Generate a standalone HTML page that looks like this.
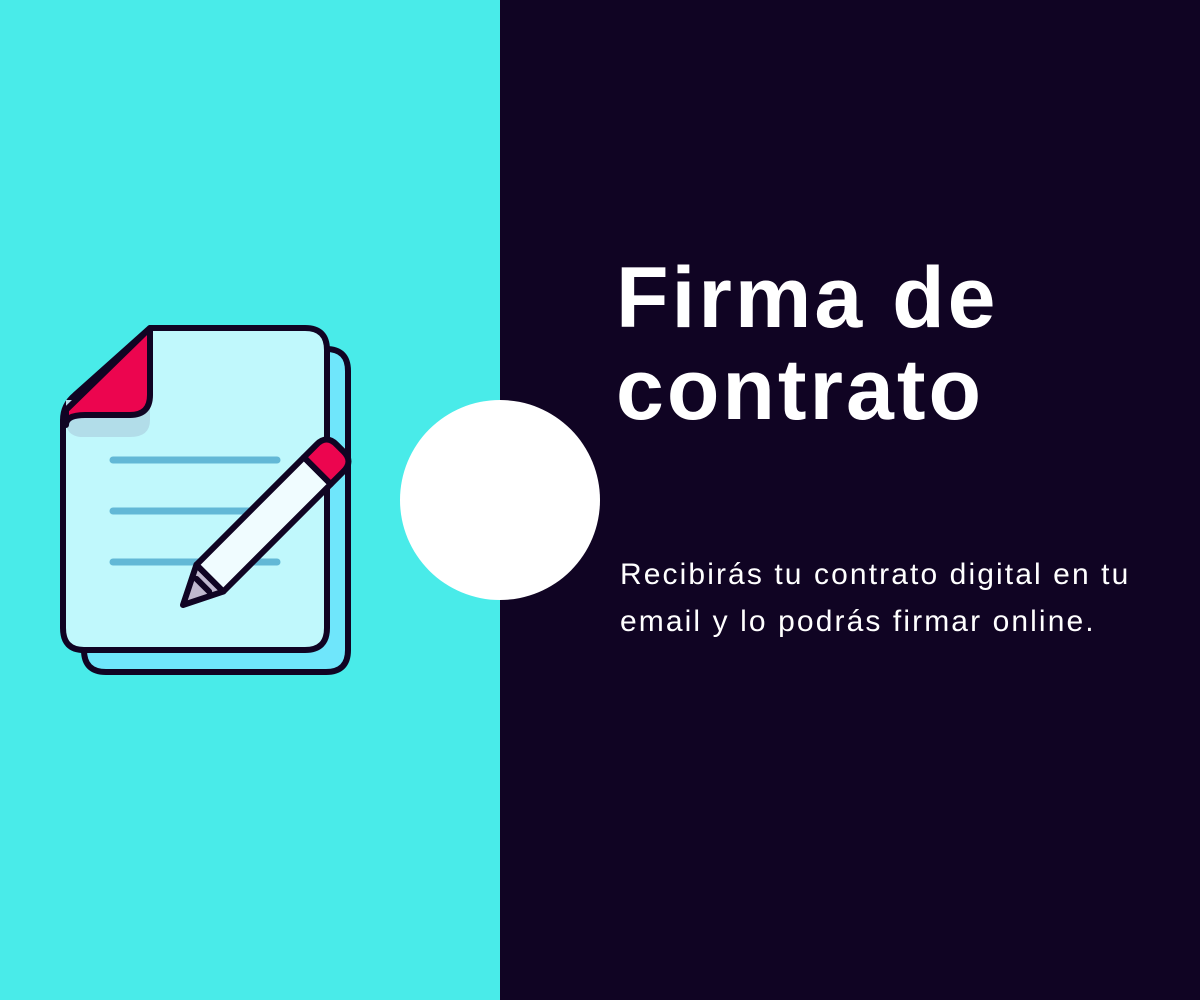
<!DOCTYPE html>
<html><head><style>
body{margin:0;width:1200px;height:1000px;position:relative;overflow:hidden;font-family:"Liberation Sans",sans-serif}
.l{position:absolute;left:0;top:0;width:500px;height:1000px;background:#49ebe9}
.r{position:absolute;left:500px;top:0;width:700px;height:1000px;background:#100423}
.c{position:absolute;left:400px;top:400px;width:200px;height:200px;border-radius:50%;background:#fff}
h1{position:absolute;left:616px;top:252px;margin:0;color:#fff;font-size:86px;line-height:92px;font-weight:bold;letter-spacing:3px}
p{position:absolute;left:620px;top:551px;margin:0;color:#fff;font-size:30px;line-height:47px;letter-spacing:2.1px}
</style></head><body>
<div class="l"></div><div class="r"></div><div class="c"></div>
<svg style="position:absolute;left:0;top:0" width="500" height="1000">
<g stroke="#100423" stroke-width="6" stroke-linejoin="round">
<path d="M200 349 H326 Q348 349 348 371 V650 Q348 672 326 672 H106 Q84 672 84 650 V600 H200 Z" fill="#6fe6fb"/>
<path d="M150 328 H305 Q327 328 327 350 V628 Q327 650 305 650 H84 Q63 650 63 628 V420 Q63 405 75 395 Z" fill="#c0f8fc"/>
</g>
<path d="M66 422 Q66 435 80 437 H130 Q150 437 150 420 V400 H66 Z" fill="#b2dde9"/>
<path d="M150 328 V395 Q150 415 130 415 H85 Q66 415 66 425 L66 410 Z" fill="#ec054f" stroke="#100423" stroke-width="6" stroke-linejoin="round"/>
<g stroke="#62b8d6" stroke-width="7" stroke-linecap="round">
<line x1="113" y1="460" x2="277" y2="460"/><line x1="113" y1="511" x2="277" y2="511"/><line x1="113" y1="562" x2="277" y2="562"/>
</g>
<g transform="translate(183,605) rotate(-45)" stroke="#100423" stroke-width="6" stroke-linejoin="round">
<path d="M0 0 L38 -19 V19 Z" fill="#c0b8cf"/>
<rect x="38" y="-19" width="152" height="38" fill="#f0fcff"/>
<path d="M190 -19 H208 Q222 -19 222 -5 V5 Q222 19 208 19 H190 Z" fill="#ec054f"/>
<line x1="28" y1="-9" x2="28" y2="9" stroke-linecap="round"/>
</g>
</svg>
<h1>Firma de<br>contrato</h1>
<p>Recibirás tu contrato digital en tu<br>email y lo podrás firmar online.</p>
</body></html>
